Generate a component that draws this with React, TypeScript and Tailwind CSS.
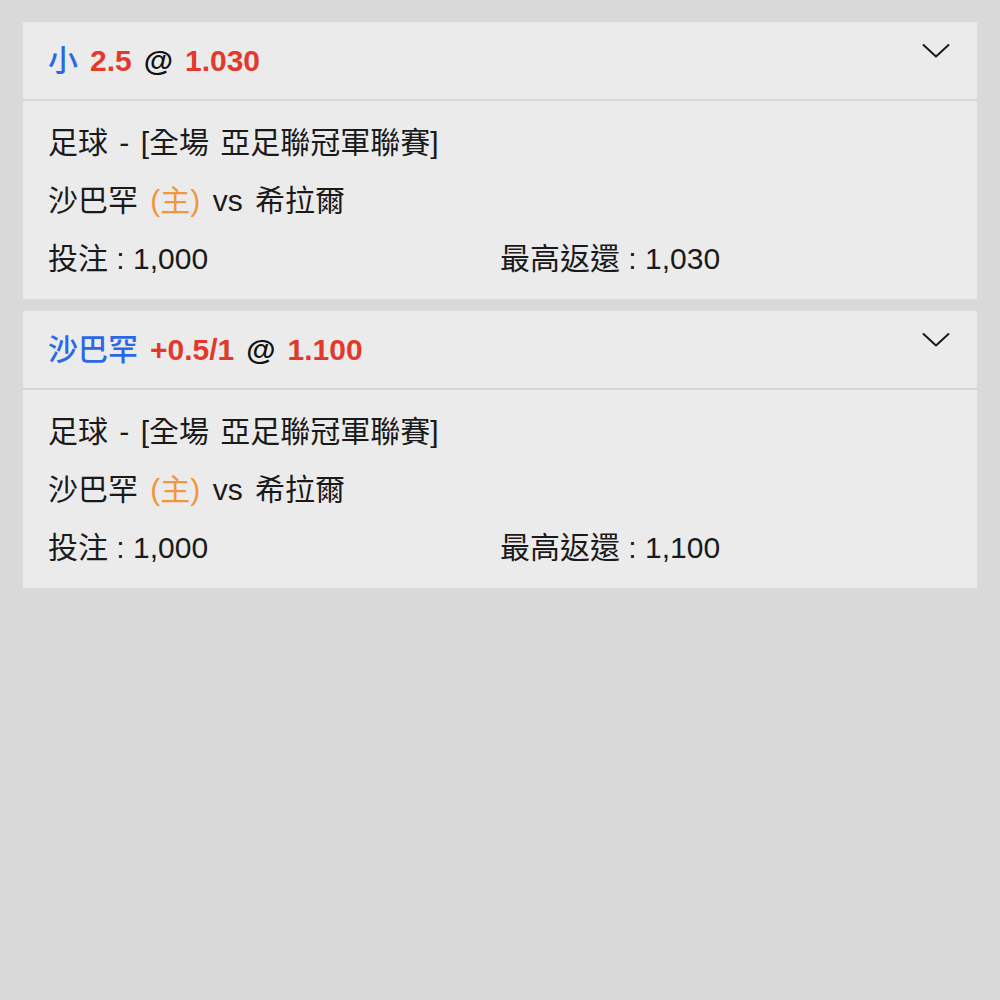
import { FC } from "react";

interface Bet {
  pick: string;
  line: string;
  odds: string;
  league: string;
  home: string;
  away: string;
  stake: string;
  payout: string;
}

const bets: Bet[] = [
  {
    pick: "小",
    line: "2.5",
    odds: "1.030",
    league: "足球 - [全場 亞足聯冠軍聯賽]",
    home: "沙巴罕",
    away: "希拉爾",
    stake: "1,000",
    payout: "1,030",
  },
  {
    pick: "沙巴罕",
    line: "+0.5/1",
    odds: "1.100",
    league: "足球 - [全場 亞足聯冠軍聯賽]",
    home: "沙巴罕",
    away: "希拉爾",
    stake: "1,000",
    payout: "1,100",
  },
];

const Chevron = () => (
  <svg width="28" height="16" viewBox="0 0 28 16" fill="none">
    <path d="M1.5 2 L14 13.5 L26.5 2" stroke="#1a1a1a" strokeWidth="2" strokeLinecap="round" strokeLinejoin="round" />
  </svg>
);

const BetCard: FC<{ bet: Bet }> = ({ bet }) => {
  return (
    <div className="bg-[#ebebeb]">
      <div className="relative flex h-[77px] items-center px-[25px] pb-[1px] text-[30px]">
        <span className="font-medium text-[#2c68e6]">{bet.pick}</span>
        <span className="ml-[12px] font-bold text-[#e3392c]">{bet.line}</span>
        <span className="ml-[12px] font-bold text-[#111]">@</span>
        <span className="ml-[12px] font-bold text-[#e3392c]">{bet.odds}</span>
        <span className="absolute right-[27px] top-[21px]">
          <Chevron />
        </span>
      </div>
      <div className="h-[2px] bg-[#d6d6d6]" />
      <div className="px-[25px] pt-[13px] pb-[11px] text-[30px] leading-[58px] text-[#1a1a1a]">
        <div className="[word-spacing:3px]">{bet.league}</div>
        <div className="[word-spacing:4px]">
          {bet.home} <span className="text-[#f0963c]">(主)</span> vs {bet.away}
        </div>
        <div className="grid grid-cols-2">
          <div>投注 : {bet.stake}</div>
          <div>最高返還 : {bet.payout}</div>
        </div>
      </div>
    </div>
  );
};

const App = () => {
  return (
    <div
      className="min-h-screen w-full bg-[#d9d9d9] px-[23px] pt-[22px]"
      style={{ fontFamily: '"Liberation Sans", "Noto Sans CJK TC", sans-serif' }}
    >
      <div className="flex flex-col gap-[12px]">
        {bets.map((bet, i) => (
          <BetCard key={i} bet={bet} />
        ))}
      </div>
    </div>
  );
};

export default App;
